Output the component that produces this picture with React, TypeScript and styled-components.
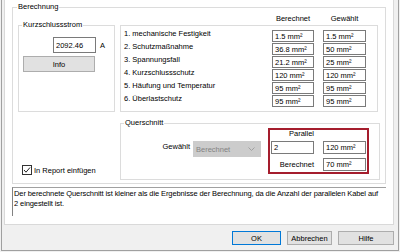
import React from "react";
import styled, { createGlobalStyle } from "styled-components";

const GlobalStyle = createGlobalStyle`
    * {
        box-sizing: border-box;
    }
    html, body {
        margin: 0;
        padding: 0;
        background-color: #f0f0f0;
    }
    body {
        font-family: "Liberation Sans", Arial, sans-serif;
        font-size: 7.5px;
        color: #000;
    }
`;

const Window = styled.div`
    width: 400px;
    height: 252px;
    padding-left: 1px;
    overflow: hidden;
    background-color: #f0f0f0;
`;

const Dialog = styled.div`
    width: 398px;
    height: 251px;
    border: 1px solid #a0a0a0;
    border-top: none;
    padding: 0 4px 0 2px;
    display: flex;
    flex-direction: column;
`;

const TabPage = styled.div`
    height: 225px;
    background-color: #ffffff;
    border: 1px solid #d9d9d9;
    border-top: none;
    padding: 2px 7px 0 7px;
    display: flex;
    flex-direction: column;
`;

const Group = styled.fieldset<{ $pad: string; $height: number }>`
    margin: 0;
    min-width: 0;
    height: ${(p) => p.$height}px;
    padding: ${(p) => p.$pad};
    border: 1px solid #dcdcdc;
`;

const GroupTitle = styled.legend`
    padding: 0 1px;
    margin-left: -1px;
    line-height: 10px;
`;

const Columns = styled.div`
    display: flex;
    gap: 5px;
    height: 100%;
`;

const LeftColumn = styled.div`
    width: 97px;
    display: flex;
    flex-direction: column;
`;

const RightColumn = styled.div`
    width: 260px;
    display: flex;
    flex-direction: column;
`;

const CurrentGroup = styled(Group)`
    margin-top: 8px;
`;

const CurrentRow = styled.div`
    display: flex;
    align-items: center;
    margin: 7px 0 0 30px;
    gap: 4px;
`;

const ValueBox = styled.div<{ $width: number; $height: number }>`
    width: ${(p) => p.$width}px;
    height: ${(p) => p.$height}px;
    border: 1px solid #7a7a7a;
    background-color: #ffffff;
    padding-left: 2px;
    display: flex;
    align-items: center;
    white-space: nowrap;
`;

const Button = styled.button<{ $width: number; $default?: boolean }>`
    width: ${(p) => p.$width}px;
    height: 14px;
    padding: 0;
    font: inherit;
    color: #000;
    background-color: #e1e1e1;
    border: 1px solid ${(p) => (p.$default ? "#0078d7" : "#adadad")};
`;

const InfoButton = styled(Button)`
    height: 16px;
    margin-top: 3px;
`;

const CheckRow = styled.label`
    display: flex;
    align-items: center;
    gap: 2px;
    margin: auto 0 5px 4px;
`;

const CheckBox = styled.span`
    width: 10px;
    height: 10px;
    border: 1px solid #333333;
    background-color: #ffffff;
    display: flex;
    align-items: center;
    justify-content: center;
`;

const ColumnGrid = styled.div`
    display: grid;
    grid-template-columns: 1fr 42px 43px;
    column-gap: 9px;
`;

const HeaderRow = styled(ColumnGrid)`
    height: 13px;
    padding: 0 14px 0 4px;
    align-items: center;
    text-align: center;
`;

const ListPanel = styled(ColumnGrid)`
    height: 87px;
    margin-right: 2px;
    border: 1px solid #dcdcdc;
    padding: 4px 11px 0 3px;
    grid-auto-rows: 13px;
    align-content: start;
`;

const RowLabel = styled.div`
    line-height: 8px;
    white-space: nowrap;
`;

const SectionGroup = styled(Group)`
    margin-top: 6px;
`;

const SectionRow = styled.div`
    display: flex;
    justify-content: flex-end;
    align-items: flex-start;
    padding-right: 10px;
`;

const FieldLabel = styled.span`
    margin-top: 14px;
    line-height: 10px;
`;

const Combo = styled.div`
    width: 68px;
    height: 16px;
    margin: 13px 0 0 3px;
    padding: 0 6px 0 3px;
    background-color: #cccccc;
    color: #838383;
    display: flex;
    align-items: center;
    justify-content: space-between;
`;

const Highlight = styled.div`
    width: 101px;
    height: 46px;
    margin-left: 7px;
    border: 2px solid #a51d2d;
    padding: 0 1px 1px 1px;
    display: grid;
    grid-template-columns: 43px 43px;
    grid-template-rows: 11px 13px 17px;
    column-gap: 9px;
`;

const CellLabel = styled.div<{ $row: number }>`
    grid-column: 1;
    grid-row: ${(p) => p.$row};
    justify-self: end;
    align-self: ${(p) => (p.$row === 1 ? "start" : "end")};
    line-height: ${(p) => (p.$row === 1 ? 8 : 13)}px;
`;

const Cell = styled.div<{ $row: number; $col: number }>`
    grid-column: ${(p) => p.$col};
    grid-row: ${(p) => p.$row};
    align-self: end;
`;

const Message = styled.div`
    height: 29px;
    margin-top: 3px;
    border-top: 1px solid #a0a0a0;
    border-left: 1px solid #828282;
    padding: 1px 0 0 1px;
    line-height: 10px;
    letter-spacing: -0.1px;
    white-space: pre;
    overflow: hidden;
`;

const ButtonBar = styled.div`
    display: flex;
    justify-content: flex-end;
    gap: 6px;
    margin-top: 6px;
`;

const rows = [
    { label: "1. mechanische Festigkeit", calc: "1.5 mm²", chosen: "1.5 mm²" },
    { label: "2. Schutzmaßnahme", calc: "36.8 mm²", chosen: "50 mm²" },
    { label: "3. Spannungsfall", calc: "21.2 mm²", chosen: "25 mm²" },
    { label: "4. Kurzschlussschutz", calc: "120 mm²", chosen: "120 mm²" },
    { label: "5. Häufung und Temperatur", calc: "95 mm²", chosen: "95 mm²" },
    { label: "6. Überlastschutz", calc: "95 mm²", chosen: "95 mm²" },
];

const App: React.FC = () => {
    return (
        <Window>
            <GlobalStyle />
            <Dialog>
                <TabPage>
                    <Group $pad="0 5px 3px 5px" $height={182}>
                        <GroupTitle>Berechnung</GroupTitle>
                        <Columns>
                            <LeftColumn>
                                <CurrentGroup $pad="0 4px" $height={92}>
                                    <GroupTitle>Kurzschlussstrom</GroupTitle>
                                    <CurrentRow>
                                        <ValueBox $width={43} $height={16}>2092.46</ValueBox>
                                        <span>A</span>
                                    </CurrentRow>
                                    <InfoButton $width={72}>Info</InfoButton>
                                </CurrentGroup>
                                <CheckRow>
                                    <CheckBox>
                                        <svg width="8" height="8" viewBox="0 0 8 8">
                                            <polyline points="1,4 3,6.2 7,1.5" fill="none" stroke="#222" strokeWidth="1" />
                                        </svg>
                                    </CheckBox>
                                    In Report einfügen
                                </CheckRow>
                            </LeftColumn>
                            <RightColumn>
                                <HeaderRow>
                                    <span />
                                    <span>Berechnet</span>
                                    <span>Gewählt</span>
                                </HeaderRow>
                                <ListPanel>
                                    {rows.map((r) => (
                                        <React.Fragment key={r.label}>
                                            <RowLabel>{r.label}</RowLabel>
                                            <ValueBox $width={42} $height={12}>{r.calc}</ValueBox>
                                            <ValueBox $width={43} $height={12}>{r.chosen}</ValueBox>
                                        </React.Fragment>
                                    ))}
                                </ListPanel>
                                <SectionGroup $pad="0 0 5px 4px" $height={62}>
                                    <GroupTitle>Querschnitt</GroupTitle>
                                    <SectionRow>
                                        <FieldLabel>Gewählt</FieldLabel>
                                        <Combo>
                                            <span>Berechnet</span>
                                            <svg width="7" height="4" viewBox="0 0 7 4">
                                                <polyline points="0.5,0.5 3.5,3.5 6.5,0.5" fill="none" stroke="#a0a0a0" strokeWidth="1" />
                                            </svg>
                                        </Combo>
                                        <Highlight>
                                            <CellLabel $row={1}>Parallel</CellLabel>
                                            <Cell $row={2} $col={1}>
                                                <ValueBox $width={43} $height={13}>2</ValueBox>
                                            </Cell>
                                            <Cell $row={2} $col={2}>
                                                <ValueBox $width={43} $height={13}>120 mm²</ValueBox>
                                            </Cell>
                                            <CellLabel $row={3}>Berechnet</CellLabel>
                                            <Cell $row={3} $col={2}>
                                                <ValueBox $width={43} $height={13}>70 mm²</ValueBox>
                                            </Cell>
                                        </Highlight>
                                    </SectionRow>
                                </SectionGroup>
                            </RightColumn>
                        </Columns>
                    </Group>
                    <Message>
                        {"Der berechnete Querschnitt ist kleiner als die Ergebnisse der Berechnung, da die Anzahl der parallelen Kabel auf\n2 eingestellt ist."}
                    </Message>
                </TabPage>
                <ButtonBar>
                    <Button $width={49} $default>OK</Button>
                    <Button $width={45}>Abbrechen</Button>
                    <Button $width={56}>Hilfe</Button>
                </ButtonBar>
            </Dialog>
        </Window>
    );
};

export default App;
